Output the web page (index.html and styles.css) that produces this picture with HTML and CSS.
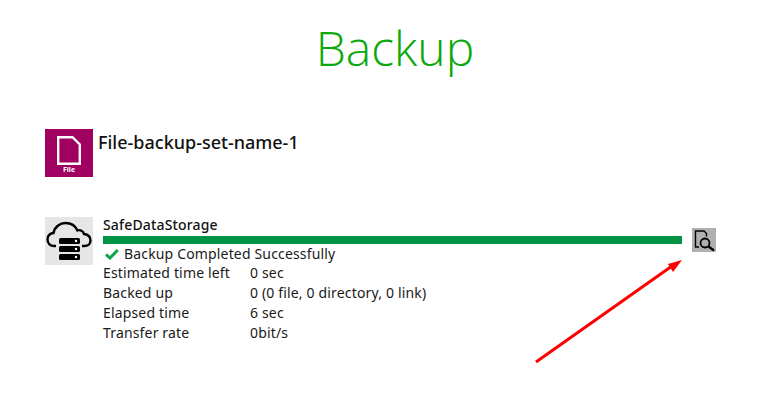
FILE: index.html
```html
<!DOCTYPE html>
<html lang="en">
<head>
  <meta charset="UTF-8">
  <title>Backup</title>
  <link rel="stylesheet" href="styles.css">
</head>
<body>
  <h1 class="title">Backup</h1>

  <!-- Backup set -->
  <div class="backup-set">
    <div class="set-icon">
      <svg width="24" height="29" viewBox="0 0 24 29">
        <path d="M1.200 1.200H15.500L22.800 8.500V27.800H1.200Z" fill="none" stroke="#fff" stroke-width="2.400"/>
      </svg>
      <span class="set-icon-label">File</span>
    </div>
    <div class="set-name">File-backup-set-name-1</div>
  </div>

  <!-- Destination -->
  <div class="destination">
    <div class="dest-icon">
      <svg width="48" height="48" viewBox="0 0 48 48">
        <path d="M11 29H9C5 29 2.500 26 2.500 22.500C2.500 19 5 16.500 8.500 16C9.500 10 15 6 20.500 6C26 6 30.500 9 32.500 13.500C35 12.500 38.500 14 39 17C43 17.500 45.500 20 45.500 23.500C45.500 27 43 29 39.500 29H37" fill="none" stroke="#000" stroke-width="2.400"/>
        <rect x="14" y="21" width="21" height="6" rx="1.500"/>
        <rect x="14" y="29" width="21" height="6" rx="1.500"/>
        <rect x="14" y="37" width="21" height="6" rx="1.500"/>
        <circle cx="31" cy="24" r="1.200" fill="#fff"/>
        <circle cx="31" cy="32" r="1.200" fill="#fff"/>
        <circle cx="31" cy="40" r="1.200" fill="#fff"/>
      </svg>
    </div>
    <div class="dest-main">
      <div class="dest-name">SafeDataStorage</div>
      <div class="progress"></div>
      <div class="status">
        <svg class="check" width="14" height="11" viewBox="0 0 14 11">
          <path d="M1 5.500L5 9L12.800 1" fill="none" stroke="#12a64c" stroke-width="3"/>
        </svg>
        Backup Completed Successfully
      </div>
      <div class="info-row"><span class="info-label">Estimated time left</span><span>0 sec</span></div>
      <div class="info-row"><span class="info-label">Backed up</span><span>0 (0 file, 0 directory, 0 link)</span></div>
      <div class="info-row"><span class="info-label">Elapsed time</span><span>6 sec</span></div>
      <div class="info-row"><span class="info-label">Transfer rate</span><span>0bit/s</span></div>
    </div>
    <div class="report-button">
      <svg width="24" height="24" viewBox="0 0 24 24">
        <path d="M7 19H3.500V3H12L14.500 5.500V8.500" fill="none" stroke="#000" stroke-width="1.400"/>
        <circle cx="13" cy="15" r="4.500" fill="none" stroke="#000" stroke-width="1.800"/>
        <path d="M16.500 18.500L22 22.500" stroke="#000" stroke-width="2.200"/>
      </svg>
    </div>
  </div>

  <!-- Red arrow annotation -->
  <svg class="arrow" width="782" height="400" viewBox="0 0 782 400">
    <path d="M536 362L672 266" stroke="#f00" stroke-width="3"/>
    <path d="M682 260L668 264L673 272Z" fill="#f00"/>
  </svg>
</body>
</html>
```

FILE: styles.css
```css
body {
  font-family: "Noto Sans", sans-serif;
  margin: 0;
  padding: 0;
  background-color: #fff;
  color: #1a1a1a;
  position: relative;
  height: 400px;
  overflow: hidden;
}
.title {
  margin: 0;
  padding: 15px 0 0 8px;
  height: 115px;
  box-sizing: border-box;
  text-align: center;
  font-family: "Open Sans", sans-serif;
  font-size: 48px;
  line-height: 65px;
  font-weight: 300;
  color: #0aa80a;
}
.backup-set {
  display: flex;
  padding-left: 45px;
  margin-top: 14px;
  height: 48px;
}
.set-icon {
  width: 48px;
  height: 48px;
  background-color: #a00060;
  display: flex;
  flex-direction: column;
  align-items: center;
  padding-top: 7px;
  box-sizing: border-box;
}
.set-icon-label {
  color: #fff;
  font-size: 7px;
  line-height: 9px;
  font-weight: 700;
}
.set-name {
  margin-left: 5px;
  font-size: 18px;
  line-height: 26px;
  font-weight: 500;
  color: #111;
}
.destination {
  display: flex;
  padding-left: 45px;
  margin-top: 40px;
}
.dest-icon {
  width: 48px;
  height: 48px;
  background-color: #e6e6e6;
}
.dest-main {
  width: 579px;
  margin-left: 10px;
  font-size: 14px;
  line-height: 20px;
  letter-spacing: 0.16px;
}
.dest-name {
  font-weight: 500;
  color: #111;
  height: 19px;
  line-height: 16px;
}
.progress {
  height: 8px;
  background-color: #009444;
}
.status {
  display: flex;
  align-items: center;
  height: 19px;
  gap: 5px;
  padding-left: 2px;
}
.check {
  margin-top: 2px;
}
.info-row {
  display: flex;
  height: 20px;
}
.info-label {
  width: 147px;
}
.report-button {
  width: 24px;
  height: 24px;
  margin: 11px 0 0 10px;
  background-color: #b0b0b0;
}
.arrow {
  position: absolute;
  left: 0;
  top: 0;
}
```
